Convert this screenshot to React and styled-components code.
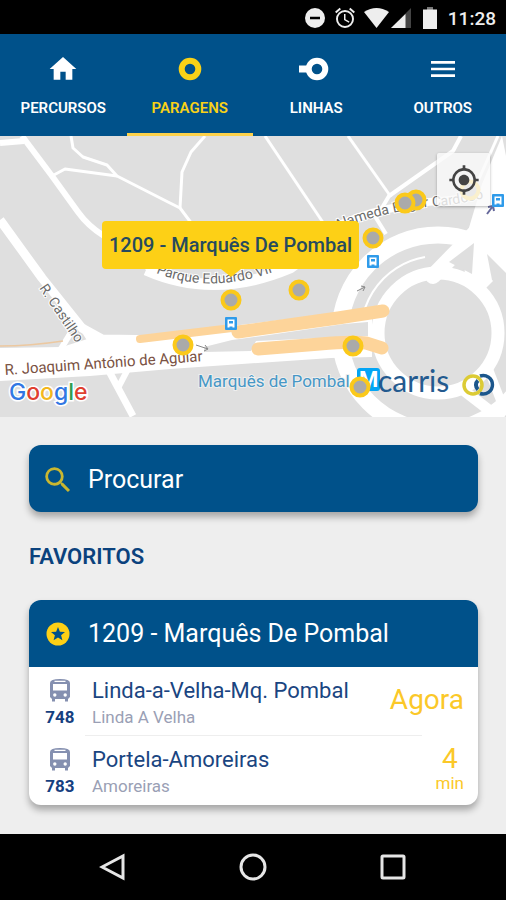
import React from "react";
import styled, { createGlobalStyle } from "styled-components";
import { MdHome, MdMenu, MdSearch, MdMyLocation, MdOutlineAlarm } from "react-icons/md";

const tabs = [
  { id: "percursos", label: "PERCURSOS", icon: <MdHome size={32} /> },
  { id: "paragens", label: "PARAGENS", icon: <StopIcon />, active: true },
  { id: "linhas", label: "LINHAS", icon: <LineIcon /> },
  { id: "outros", label: "OUTROS", icon: <MdMenu size={32} /> },
];

const stops = [
  [470, 54],
  [416, 64],
  [405, 67],
  [373, 102],
  [299, 154],
  [231, 164],
  [183, 209],
  [353, 210],
  [360, 251],
];

const busSigns = [
  [367, 119],
  [225, 181],
  [492, 58],
];

const arrivals = [
  { line: "748", title: "Linda-a-Velha-Mq. Pombal", place: "Linda A Velha", time: "Agora" },
  { line: "783", title: "Portela-Amoreiras", place: "Amoreiras", time: "4", unit: "min" },
];

function StopIcon() {
  return (
    <svg width="32" height="32" viewBox="0 0 32 32" fill="none">
      <circle cx="16" cy="16" r="8.3" stroke="currentColor" strokeWidth="6" />
    </svg>
  );
}

function LineIcon() {
  return (
    <svg width="32" height="32" viewBox="0 0 32 32" fill="none" stroke="currentColor" strokeWidth="6">
      <circle cx="17" cy="16" r="8.3" />
      <path d="M-1 16h9" strokeWidth="7" />
    </svg>
  );
}

function StarBadge() {
  return (
    <svg width="24" height="24" viewBox="0 0 24 24">
      <circle cx="12" cy="12" r="11.5" fill="#fdd016" />
      <path
        d="M12 5l1.9 4.7 5.1.4-3.9 3.2 1.3 4.9-4.4-2.7-4.4 2.7 1.3-4.9L5 10.1l5.1-.4z"
        fill="#00518a"
      />
    </svg>
  );
}

function BusIcon() {
  return (
    <svg width="20" height="23" viewBox="0 0 20 23" fill="currentColor">
      <path
        fillRule="evenodd"
        d="M0 4Q0 0 10 0T20 4V18L18 20V22.500H15V20H5V22.500H2V20L0 18zM3 5V11.500H17V5zM4.500 1.800V3H15.500V1.800z"
      />
      <circle cx="4.800" cy="16" r="1.700" fill="#fff" />
      <circle cx="15.200" cy="16" r="1.700" fill="#fff" />
    </svg>
  );
}

function MapDrawing() {
  return (
    <MapSvg viewBox="0 0 506 281" preserveAspectRatio="xMidYMid slice" role="img" aria-label="Mapa">
      <defs>
        <path id="parque" d="M156 137Q214 160 284 132" />
        <path id="alameda" d="M337 94Q358 85 388 78T438 70T502 58" />
      </defs>
      <rect width="506" height="281" fill="#dfdfdf" />

      <g fill="none" stroke="#fff" strokeLinejoin="round">
        <path d="M0 7L24 5" strokeWidth="6" />
        <path d="M22 0L52 40L78 76Q88 90 104 100L150 133" strokeWidth="6" />
        <path d="M146 134Q214 164 290 132L345 92" strokeWidth="11" />
        <path d="M71 0L73 12L83 21L107 29L117 40L168 66L180 72L192 88" strokeWidth="3" />
        <path d="M52 40L65 33L117 40" strokeWidth="3" />
        <path d="M205 0L191 16L182 36L180 72" strokeWidth="3" />
        <path d="M265 0L324 88" strokeWidth="3" />
        <path d="M348 0L391 61" strokeWidth="3" />
        <path d="M461 0L453 15L389 60L376 82L386 98" strokeWidth="4" />
        <path d="M334 92Q356 80 388 73T440 65T500 54" strokeWidth="8" />
        <path d="M0 84L42 142L82 192L102 203L170 204" strokeWidth="9" />
        <path d="M70 198L59 216" strokeWidth="6" />
        <path d="M82 190L102 222L133 280" strokeWidth="7" />
        <path d="M128 233L118 252" strokeWidth="6" />
      </g>
      <path d="M0 210Q30 210 63 205" fill="none" stroke="#ecc8a0" strokeWidth="1.5" />

      {/* rotunda */}
      <g fill="none" stroke="#fff">
        <circle cx="438" cy="197" r="60" strokeWidth="13" />
        <circle cx="438" cy="197" r="98" strokeWidth="17" />
        <path d="M364 218A77 77 0 0 1 425 121" strokeWidth="2" />
        <path d="M463 254L502 284" strokeWidth="11" />
        <path d="M488 232L502 268" strokeWidth="9" />
        <path d="M433 140L477 95" strokeWidth="16" strokeLinecap="round" />
      </g>
      <path d="M502 0L482 48L468 95L464 144L480 158L506 132V20z" fill="#fff" />
      <path d="M474 107L472 138L449 126z" fill="#dfdfdf" />
      <path d="M487 118L506 137V155L492 144z" fill="#dfdfdf" />
      <path d="M498 0L478 45" fill="none" stroke="#fff" strokeWidth="3" />

      <path
        d="M0 212L62 211L100 199L170 199L232 190L346 176L372 174V221L331 222L170 233L90 240L0 245z"
        fill="#fff"
      />
      <path d="M204 211L232 204L262 200L344 188L368 186L368 200L256 205L251 215L204 216z" fill="#dfdfdf" />
      <g fill="none" stroke="#fdd49a" strokeLinecap="round">
        <path d="M140 203L232 192" strokeWidth="8" />
        <path d="M238 196L338 182L383 175" strokeWidth="13" />
        <path d="M258 213L320 208Q350 205 366 207L382 212" strokeWidth="13" />
      </g>

      <RoadName transform="translate(39 152) rotate(56)">R. Castilho</RoadName>
      <RoadName transform="translate(5 239) rotate(-4)" $main>
        R. Joaquim António de Aguiar
      </RoadName>
      <RoadName>
        <textPath href="#parque">Parque Eduardo VII</textPath>
      </RoadName>
      <RoadName>
        <textPath href="#alameda">Alameda Edgar Cardoso</textPath>
      </RoadName>

      <g fill="none" stroke="#888">
        <path d="M357 155l8-4m-4-1l4 1l-2 4M196 209l12 4m-3-4l3 4l-4 2" />
        <path d="M487 78l6-8m-5 1l5-1l1 5" stroke="#66699b" strokeWidth="2" />
      </g>

      {busSigns.map(([x, y]) => (
        <g key={`${x}-${y}`} transform={`translate(${x} ${y})`}>
          <rect width="12" height="13" rx="1" fill="#2f9bea" />
          <path d="M2.500 2.500h7v8h-2v-1h-3v1h-2z" fill="#fff" />
          <path d="M4 4h4v2.500H4z" fill="#2f9bea" />
        </g>
      ))}

      <rect x="357" y="232" width="23" height="23" rx="3" fill="#03a5f5" />
      <MetroLetter x="359" y="251">M</MetroLetter>
      <MetroName x="198" y="251">Marquês de Pombal</MetroName>

      {stops.map(([x, y]) => (
        <circle key={`${x}-${y}`} cx={x} cy={y} r="8.5" fill="#aaa" stroke="#fbc91a" strokeWidth="4" />
      ))}

      <GoogleName x="9" y="264">
        <tspan fill="#3277e3">G</tspan>
        <tspan fill="#e0402f">o</tspan>
        <tspan fill="#f3b71d">o</tspan>
        <tspan fill="#3277e3">g</tspan>
        <tspan fill="#2f9e4f">l</tspan>
        <tspan fill="#e0402f">e</tspan>
      </GoogleName>

      <CarrisName x="378" y="256">carris</CarrisName>
      <g fill="none" strokeWidth="3.5">
        <circle cx="473" cy="249" r="9" stroke="#dccb35" />
        <path d="M480 240A9.300 9.300 0 1 1 480 257.500" stroke="#1b568c" />
        <path d="M478 244.500A6 6 0 0 0 478 253.500" stroke="#1b568c" strokeWidth="4" />
      </g>
    </MapSvg>
  );
}

function App() {
  return (
    <Page>
      <GlobalStyle />
      <StatusBar>
        <Notices>
          <svg width="20" height="20" viewBox="0 0 20 20">
            <circle cx="10" cy="10" r="10" fill="#eee" />
            <path d="M5 10h10" stroke="#000" strokeWidth="2.5" />
          </svg>
          <MdOutlineAlarm size={24} />
        </Notices>
        <svg width="48" height="22" viewBox="0 0 48 22" fill="#eee">
          <path d="M0 5Q12.500-3 25 5L12.500 21z" />
          <path d="M27 21L47 1v20z" fill="#444" />
          <path d="M27 21L41.500 7v14z" />
        </svg>
        <svg width="14" height="22" viewBox="0 0 14 22" fill="#eee">
          <path d="M4 0h6v3H4z" fill="#777" />
          <path d="M0 2.500h14V22H0z" />
        </svg>
        <Clock>11:28</Clock>
      </StatusBar>

      <TabBar>
        {tabs.map(({ id, label, icon, active }) => (
          <Tab key={id} type="button" $active={active} aria-current={active ? "page" : undefined}>
            {icon}
            <span>{label}</span>
          </Tab>
        ))}
      </TabBar>

      <MapHolder>
        <MapDrawing />
        <Callout>1209 - Marquês De Pombal</Callout>
        <LocateButton type="button" aria-label="A minha localização">
          <MdMyLocation size={32} />
        </LocateButton>
      </MapHolder>

      <Content>
        <SearchBox>
          <MdSearch size={34} />
          <SearchInput type="search" placeholder="Procurar" aria-label="Procurar" />
        </SearchBox>

        <SectionTitle>FAVORITOS</SectionTitle>

        <Card>
          <CardHeader>
            <StarBadge />
            <CardTitle>1209 - Marquês De Pombal</CardTitle>
          </CardHeader>
          <Arrivals>
            {arrivals.map(({ line, title, place, time, unit }) => (
              <Arrival key={line}>
                <Line>
                  <BusIcon />
                  <LineNumber>{line}</LineNumber>
                </Line>
                <Route>
                  <RouteTitle>{title}</RouteTitle>
                  <RoutePlace>{place}</RoutePlace>
                </Route>
                <Wait>
                  <WaitTime>{time}</WaitTime>
                  {unit ? <WaitUnit>{unit}</WaitUnit> : null}
                </Wait>
              </Arrival>
            ))}
          </Arrivals>
        </Card>
      </Content>

      <SystemBar>
        <SystemButton type="button" aria-label="Voltar">
          <svg width="28" height="28" viewBox="0 0 28 28">
            <path d="M24 3v22L3 14z" />
          </svg>
        </SystemButton>
        <SystemButton type="button" aria-label="Início">
          <svg width="28" height="28" viewBox="0 0 28 28">
            <circle cx="14" cy="14" r="12" />
          </svg>
        </SystemButton>
        <SystemButton type="button" aria-label="Recentes">
          <svg width="28" height="28" viewBox="0 0 28 28">
            <rect x="3" y="3" width="22" height="22" rx="1" />
          </svg>
        </SystemButton>
      </SystemBar>
    </Page>
  );
}

export default App;

const GlobalStyle = createGlobalStyle`
  * {
    box-sizing: border-box;
  }
  body {
    margin: 0;
    font-family: Roboto, "Liberation Sans", sans-serif;
  }
  button {
    padding: 0;
    border: none;
    background: none;
    font-family: inherit;
    cursor: pointer;
  }
`;

const Page = styled.div`
  display: flex;
  flex-direction: column;
  min-height: 100vh;
  background: #eee;
`;

const StatusBar = styled.div`
  display: flex;
  align-items: center;
  justify-content: flex-end;
  gap: 11px;
  height: 34px;
  padding: 2px 10px 0;
  background: #000;
  color: #eee;
`;

const Notices = styled.div`
  display: flex;
  align-items: center;
  gap: 8px;
  margin-right: -4px;
`;

const Clock = styled.span`
  font-size: 19px;
  font-weight: 500;
`;

const TabBar = styled.nav`
  display: flex;
  height: 102px;
  background: #00518a;
`;

const Tab = styled.button`
  flex: 1;
  display: flex;
  flex-direction: column;
  align-items: center;
  gap: 14px;
  padding-top: 19px;
  border-bottom: 3px solid ${({ $active }) => ($active ? "#fdd14a" : "#00518a")};
  color: ${({ $active }) => ($active ? "#f8d117" : "#fff")};
  font-size: 15px;
  font-weight: 600;
  line-height: 18px;
  svg {
    display: block;
    overflow: visible;
  }
`;

const MapHolder = styled.section`
  position: relative;
  height: 281px;
`;

const MapSvg = styled.svg`
  display: block;
  width: 100%;
  height: 100%;
`;

const RoadName = styled.text`
  fill: ${({ $main }) => ($main ? "#7a5243" : "#6b6b6b")};
  stroke: #fff;
  stroke-width: 2px;
  paint-order: stroke;
  font-size: ${({ $main }) => ($main ? "15px" : "14px")};
`;

const MetroName = styled.text`
  fill: #4697c6;
  stroke: #eee;
  stroke-width: 2px;
  paint-order: stroke;
  font-size: 17px;
`;

const MetroLetter = styled.text`
  fill: #fff;
  font-size: 22px;
  font-weight: 700;
`;

const GoogleName = styled.text`
  stroke: #fff;
  stroke-width: 3px;
  paint-order: stroke;
  font-family: Inter, sans-serif;
  font-size: 23px;
  font-weight: 500;
`;

const CarrisName = styled.text`
  fill: #235a8f;
  font-family: Lato, sans-serif;
  font-size: 30px;
`;

const Callout = styled.div`
  position: absolute;
  top: 85px;
  left: 102px;
  padding: 12px 7px;
  border-radius: 4px;
  background: #fdd016;
  color: #264a5f;
  font-size: 20px;
  font-weight: 500;
  line-height: 24px;
  white-space: nowrap;
  &::after {
    content: "";
    position: absolute;
    top: 100%;
    left: 50%;
    margin-left: -10px;
    border: 10px solid transparent;
    border-top: 8px solid #fdd016;
    border-bottom: none;
  }
`;

const LocateButton = styled.button`
  position: absolute;
  top: 17px;
  right: 16px;
  display: flex;
  align-items: center;
  justify-content: center;
  width: 53px;
  height: 53px;
  border-radius: 2px;
  background: rgba(250, 250, 250, 0.8);
  box-shadow: 0 1px 3px rgba(0, 0, 0, 0.3);
  color: #444;
`;

const Content = styled.main`
  flex: 1;
  padding: 28px 28px 29px 29px;
`;

const SearchBox = styled.label`
  display: flex;
  align-items: center;
  gap: 13px;
  height: 67px;
  padding: 2px 12px 0;
  border-radius: 12px;
  background: #00518a;
  box-shadow: 0 5px 7px rgba(0, 0, 0, 0.3);
  svg {
    flex: none;
    color: #c9b730;
  }
`;

const SearchInput = styled.input`
  flex: 1;
  min-width: 0;
  padding: 0;
  border: none;
  outline: none;
  background: none;
  color: #fff;
  font-family: inherit;
  font-size: 25px;
  &::placeholder {
    color: #fff;
    opacity: 1;
  }
`;

const SectionTitle = styled.h2`
  margin: 32px 0 30px;
  color: #0b427d;
  font-size: 22px;
  font-weight: 600;
  line-height: 26px;
`;

const Card = styled.section`
  overflow: hidden;
  border-radius: 12px;
  background: #fff;
  box-shadow: 0 5px 7px rgba(0, 0, 0, 0.3);
`;

const CardHeader = styled.header`
  display: flex;
  align-items: center;
  gap: 18px;
  height: 67px;
  padding: 0 17px;
  background: #00518a;
`;

const CardTitle = styled.h3`
  margin: 0;
  color: #fff;
  font-size: 25px;
  font-weight: 400;
`;

const Arrivals = styled.ul`
  margin: 0;
  padding: 0;
  list-style: none;
`;

const Arrival = styled.li`
  display: flex;
  height: 69px;
  padding: 0 14px 0 7px;
  /* divider starts under the title and stops short of the card edge */
  &:not(:last-child) {
    background: linear-gradient(#eee, #eee) no-repeat 50% 100% / calc(100% - 112px) 1px;
  }
`;

const Line = styled.div`
  display: flex;
  flex-direction: column;
  align-items: center;
  gap: 5px;
  width: 48px;
  padding-top: 12px;
  color: #8590b0;
`;

const LineNumber = styled.span`
  color: #16407f;
  font-size: 17px;
  font-weight: 700;
  line-height: 20px;
`;

const Route = styled.div`
  flex: 1;
  padding: 10px 0 0 8px;
`;

const RouteTitle = styled.div`
  color: #1a4581;
  font-size: 22px;
  line-height: 28px;
`;

const RoutePlace = styled.div`
  margin-top: 2px;
  color: #9a9fb5;
  font-size: 17px;
  line-height: 20px;
`;

const Wait = styled.div`
  display: flex;
  flex-direction: column;
  align-items: center;
  justify-content: center;
  padding-bottom: 4px;
  color: #fbc828;
`;

const WaitTime = styled.span`
  font-size: 28px;
  line-height: 28px;
`;

const WaitUnit = styled.span`
  font-size: 17px;
  line-height: 20px;
`;

const SystemBar = styled.footer`
  display: flex;
  justify-content: center;
  height: 66px;
  background: #000;
`;

const SystemButton = styled.button`
  display: flex;
  align-items: center;
  justify-content: center;
  width: 140px;
  svg {
    fill: none;
    stroke: #e6e6e6;
    stroke-width: 3px;
  }
`;
